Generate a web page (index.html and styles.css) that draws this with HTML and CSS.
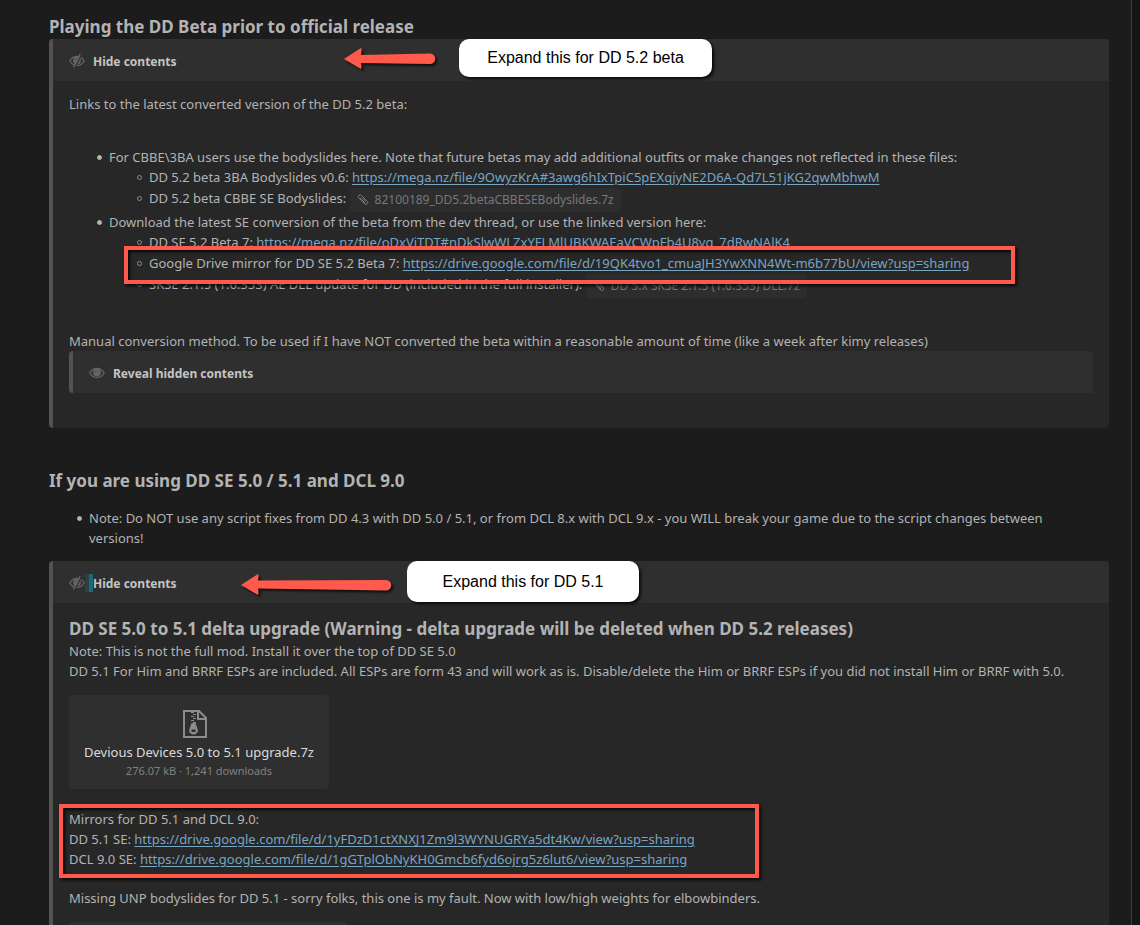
FILE: index.html
```
<!DOCTYPE html>
<html lang="en">
<head>
    <meta charset="UTF-8">
    <meta name="viewport" content="width=device-width, initial-scale=1.0">
    <title>Devious Devices SE</title>
    <link rel="stylesheet" href="styles.css">
</head>
<body>
    <main class="post">
        <h2>Playing the DD Beta prior to official release</h2>
        <section class="spoiler">
            <div class="spoiler-header">
                <button type="button" class="spoiler-toggle">
                    <svg class="eye" viewBox="0 0 16 14"><path d="M.8 7C2.500 4 5 2.400 8 2.400S13.500 4 15.200 7C13.500 10 11 11.600 8 11.600S2.500 10 .8 7z"/><circle cx="8" cy="6.500" r="3.900"/><path class="glint" d="M6 6.500A2 2 0 0 1 8 4.500"/><path class="slash" d="M12.800 0 5.800 14"/><path d="M11.200 0 4.500 13.500"/></svg>
                    <span>Hide contents</span>
                </button>
                <svg class="arrow arrow-beta" viewBox="0 0 92 24"><path d="M0 12 17 1q1 0 0 7L86 6.500a5 5 0 0 1 0 10.500L17 16q1 5 0 6z"/></svg>
                <div class="callout callout-beta">Expand this for DD 5.2 beta</div>
            </div>
            <div class="spoiler-body">
                <p>Links to the latest converted version of the DD 5.2 beta:</p>
                <ul class="files">
                    <li>For CBBE\3BA users use the bodyslides here. Note that future betas may add additional outfits or make changes not reflected in these files:
                        <ul>
                            <li>DD 5.2 beta 3BA Bodyslides v0.6: <a href="#">https://mega.nz/file/9OwyzKrA#3awg6hIxTpiC5pEXqjyNE2D6A-Qd7L51jKG2qwMbhwM</a></li>
                            <li>DD 5.2 beta CBBE SE Bodyslides: <a href="#" class="chip"><svg class="clip" viewBox="0 0 12 12"><path d="M3 4 8 9M1.500 3.500l6 6.500a2 2 0 0 0 3-2.500L4.500 1.500a1.800 1.800 0 0 0-2.800 2.300M5 3.500l4 4.500"/></svg>82100189_DD5.2betaCBBESEBodyslides.7z</a></li>
                        </ul>
                    </li>
                    <li>Download the latest SE conversion of the beta from the dev thread, or use the linked version here:
                        <ul>
                            <li>DD SE 5.2 Beta 7: <a href="#">https://mega.nz/file/oDxVjTDT#nDkSlwWLZxYFLMlUBKWAEaVCWpFb4U8yg_7dRwNAlK4</a></li>
                            <li class="marked">Google Drive mirror for DD SE 5.2 Beta 7: <a href="#">https://drive.google.com/file/d/19QK4tvo1_cmuaJH3YwXNN4Wt-m6b77bU/view?usp=sharing</a></li>
                            <li>SKSE 2.1.5 (1.6.353) AE DLL update for DD (included in the full installer): <a href="#" class="chip"><svg class="clip" viewBox="0 0 12 12"><path d="M3 4 8 9M1.500 3.500l6 6.500a2 2 0 0 0 3-2.500L4.500 1.500a1.800 1.800 0 0 0-2.800 2.300M5 3.500l4 4.500"/></svg>DD 5.x SKSE 2.1.5 (1.6.353) DLL.7z</a></li>
                        </ul>
                    </li>
                </ul>
                <p>Manual conversion method. To be used if I have NOT converted the beta within a reasonable amount of time (like a week after kimy releases)</p>
                <section class="spoiler">
                    <div class="spoiler-header">
                        <button type="button" class="spoiler-toggle">
                            <svg class="eye" viewBox="0 0 16 14"><path d="M.8 7C2.500 4 5 2.400 8 2.400S13.500 4 15.200 7C13.500 10 11 11.600 8 11.600S2.500 10 .8 7z"/><circle cx="8" cy="6.500" r="3.900"/><path class="glint" d="M6 6.500A2 2 0 0 1 8 4.500"/></svg>
                            <span>Reveal hidden contents</span>
                        </button>
                    </div>
                </section>
            </div>
        </section>

        <h2 class="next">If you are using DD SE 5.0 / 5.1 and DCL 9.0</h2>
        <ul class="note">
            <li>Note: Do NOT use any script fixes from DD 4.3 with DD 5.0 / 5.1, or from DCL 8.x with DCL 9.x - you WILL break your game due to the script changes between versions!</li>
        </ul>
        <section class="spoiler">
            <div class="spoiler-header">
                <button type="button" class="spoiler-toggle selected">
                    <svg class="eye" viewBox="0 0 16 14"><path d="M.8 7C2.500 4 5 2.400 8 2.400S13.500 4 15.200 7C13.500 10 11 11.600 8 11.600S2.500 10 .8 7z"/><circle cx="8" cy="6.500" r="3.900"/><path class="glint" d="M6 6.500A2 2 0 0 1 8 4.500"/><path class="slash" d="M12.800 0 5.800 14"/><path d="M11.200 0 4.500 13.500"/></svg>
                    <span>Hide contents</span>
                </button>
                <svg class="arrow arrow-delta" viewBox="0 0 151 24"><path d="M0 12 17 1q1 0 0 6.500L145 7a5 5 0 0 1 0 10.500L17 15.500q1 5 0 6.500z"/></svg>
                <div class="callout callout-delta">Expand this for DD 5.1</div>
            </div>
            <div class="spoiler-body">
                <h2>DD SE 5.0 to 5.1 delta upgrade (Warning - delta upgrade will be deleted when DD 5.2 releases)</h2>
                <p>Note: This is not the full mod. Install it over the top of DD SE 5.0</p>
                <p>DD 5.1 For Him and BRRF ESPs are included. All ESPs are form 43 and will work as is. Disable/delete the Him or BRRF ESPs if you did not install Him or BRRF with 5.0.</p>
                <a href="#" class="attachment">
                    <svg class="archive" viewBox="0 0 26 30"><path d="M2 2h15l7 7v19H2zM16 2v8h8"/><path class="zip" d="M9 3.500h3M11 5.500h3M9 7.500h3M11 9.500h3M9 11.500h3M11 13.500h3"/><path class="pull" fill-rule="evenodd" d="M9.500 14h4l2.500 7.500a4.500 4 0 0 1-9 0zM9.500 20.500h4v2.500h-4z"/></svg>
                    <span class="name">Devious Devices 5.0 to 5.1 upgrade.7z</span>
                    <span class="meta">276.07 kB · 1,241 downloads</span>
                </a>
                <div class="mirrors">
                    <p>Mirrors for DD 5.1 and DCL 9.0:</p>
                    <p>DD 5.1 SE: <a href="#">https://drive.google.com/file/d/1yFDzD1ctXNXJ1Zm9l3WYNUGRYa5dt4Kw/view?usp=sharing</a></p>
                    <p>DCL 9.0 SE: <a href="#">https://drive.google.com/file/d/1gGTplObNyKH0Gmcb6fyd6ojrg5z6lut6/view?usp=sharing</a></p>
                </div>
                <p>Missing UNP bodyslides for DD 5.1 - sorry folks, this one is my fault. Now with low/high weights for elbowbinders.</p>
                <div class="attachment empty"></div>
            </div>
        </section>
    </main>
</body>
</html>
```
FILE: styles.css
```
*, *::before, *::after {
    box-sizing: border-box;
}
body {
    margin: 0;
    height: 100vh;
    overflow: hidden;
    background: #151515;
    color: #b3b3b3;
    font-family: "Noto Sans", sans-serif;
    font-size: 13px;
    line-height: 20px;
}
h2, p, ul {
    margin: 0;
}
h2 {
    font-size: 17px;
    line-height: 24px;
    font-weight: 700;
}
a {
    color: #77a5c4;
    text-underline-offset: 2px;
}
.post {
    height: 100%;
    overflow: hidden;
    margin-right: 8px;
    padding: 15px 22px 0 49px;
    background: #1c1c1c;
    border-right: 1px solid #3c3c3c;
}
.next {
    margin-top: 41px;
}
.note {
    margin: 15px 0 13px;
    padding: 0 20px 0 40px;
}
ul {
    list-style: none;
}
li {
    position: relative;
}
li::before {
    content: "";
    position: absolute;
    top: 8px;
    left: -12px;
    width: 5px;
    height: 5px;
    border: 1px solid #b3b3b3;
    border-radius: 50%;
    background: #b3b3b3;
}
li li::before {
    border-color: #8c8c8c;
    background: none;
}

/* spoiler boxes */
.spoiler {
    border-left: 4px solid #525252;
    border-radius: 4px;
    background: #272727;
}
.spoiler-header {
    position: relative;
    height: 42px;
    background: #2f2f2f;
    border-radius: 0 4px 0 0;
}
.spoiler-toggle {
    display: flex;
    align-items: center;
    gap: 8px;
    height: 100%;
    padding: 2px 16px 0;
    border: 0;
    background: none;
    color: #c4c4c4;
    font: bold 12px "Noto Sans", sans-serif;
}
.spoiler-body {
    padding: 13px 16px 35px;
}
.spoiler-body h2 {
    line-height: 25px;
}
.eye {
    width: 16px;
    height: 14px;
    fill: none;
    stroke: #646464;
    stroke-width: 1.3;
}
.eye circle {
    fill: #646464;
    stroke: none;
}
.eye .glint {
    stroke: #505050;
    stroke-width: 1;
}
.eye .slash {
    stroke: #2f2f2f;
}
.selected span {
    position: relative;
}
.selected span::before {
    content: "";
    position: absolute;
    left: -8px;
    top: -1px;
    width: 8px;
    height: 18px;
    background: linear-gradient(90deg, #2c4043 50%, #1f6a72 50%);
}

/* file lists */
.files {
    margin: 33px 0;
    padding-left: 40px;
}
.files ul {
    padding-left: 40px;
    line-height: 21px;
}
.chip {
    display: inline-block;
    height: 24px;
    padding: 0 7px;
    border-radius: 4px;
    background: #2d2d2d;
    color: #787878;
    font-size: 12px;
    line-height: 24px;
    text-decoration: none;
    vertical-align: middle;
}
.clip {
    width: 12px;
    height: 12px;
    margin-right: 6px;
    fill: none;
    stroke: #787878;
    vertical-align: -2px;
}
.attachment {
    display: flex;
    flex-direction: column;
    align-items: center;
    width: 260px;
    height: 94px;
    margin: 14px 0 20px;
    padding-top: 14px;
    border-radius: 4px;
    background: #2f2f2f;
    text-decoration: none;
}
.attachment .name {
    color: #dcdcdc;
}
.attachment .meta {
    color: #808080;
    font-size: 11px;
    line-height: 18px;
}
.attachment.empty {
    width: 278px;
}
.archive {
    width: 26px;
    height: 30px;
    margin-bottom: 3px;
    margin-right: 8px;
    fill: none;
    stroke: #8c8c8c;
    stroke-width: 2;
}
.archive .zip {
    stroke-width: 1;
}
.archive .pull {
    fill: #8c8c8c;
    stroke: none;
}

/* callouts and highlights over the post */
.callout {
    position: absolute;
    display: flex;
    align-items: center;
    justify-content: center;
    border-radius: 10px;
    background: #fff;
    box-shadow: 2px 2px 3px rgba(0, 0, 0, 0.8);
    color: #000;
    font: 16px "Liberation Sans", sans-serif;
}
.callout-beta {
    top: 0;
    left: 406px;
    width: 253px;
    height: 38px;
}
.callout-delta {
    top: 0;
    left: 354px;
    width: 232px;
    height: 41px;
}
.arrow {
    position: absolute;
    height: 24px;
    fill: #ff5a4c;
    filter: drop-shadow(2px 2px 1px rgba(0, 0, 0, 0.7));
}
.arrow-beta {
    top: 8px;
    left: 291px;
    width: 92px;
}
.arrow-delta {
    top: 12px;
    left: 188px;
    width: 151px;
}
.mirrors {
    position: relative;
    margin-bottom: 19px;
}
.marked::after, .mirrors::after {
    content: "";
    position: absolute;
    border: 4px solid #ff5a4c;
    box-shadow: 2px 2px 3px rgba(0, 0, 0, 0.8), inset 2px 2px 3px rgba(0, 0, 0, 0.8);
    pointer-events: none;
}
.marked::after {
    inset: -7px 78px -10px -25px;
    z-index: 1;
}
.mirrors::after {
    top: -5px;
    left: -10px;
    width: 700px;
    height: 74px;
}
```
